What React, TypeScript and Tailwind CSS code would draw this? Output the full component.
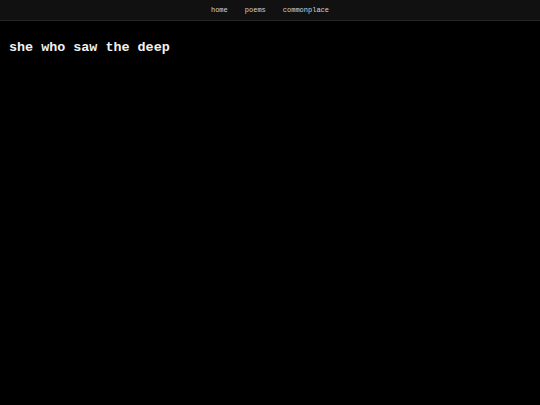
export default function App() {
  const links = ["home", "poems", "commonplace"];

  return (
    <div className="min-h-[405px] bg-black text-white font-['Liberation_Mono',monospace]">
      {/* top nav */}
      <nav className="flex h-[21px] items-center justify-center gap-[17px] border-b border-[#262626] bg-[#111111] pt-[1px]">
        {links.map((l) => (
          <a key={l} className="text-[7px] leading-none text-[#d4d4d4]">
            {l}
          </a>
        ))}
      </nav>

      <main className="px-[9px] pt-[20px]">
        <h1 className="text-[13.4px] font-bold leading-none text-[#f2f2f2]">she who saw the deep</h1>
      </main>
    </div>
  );
}
